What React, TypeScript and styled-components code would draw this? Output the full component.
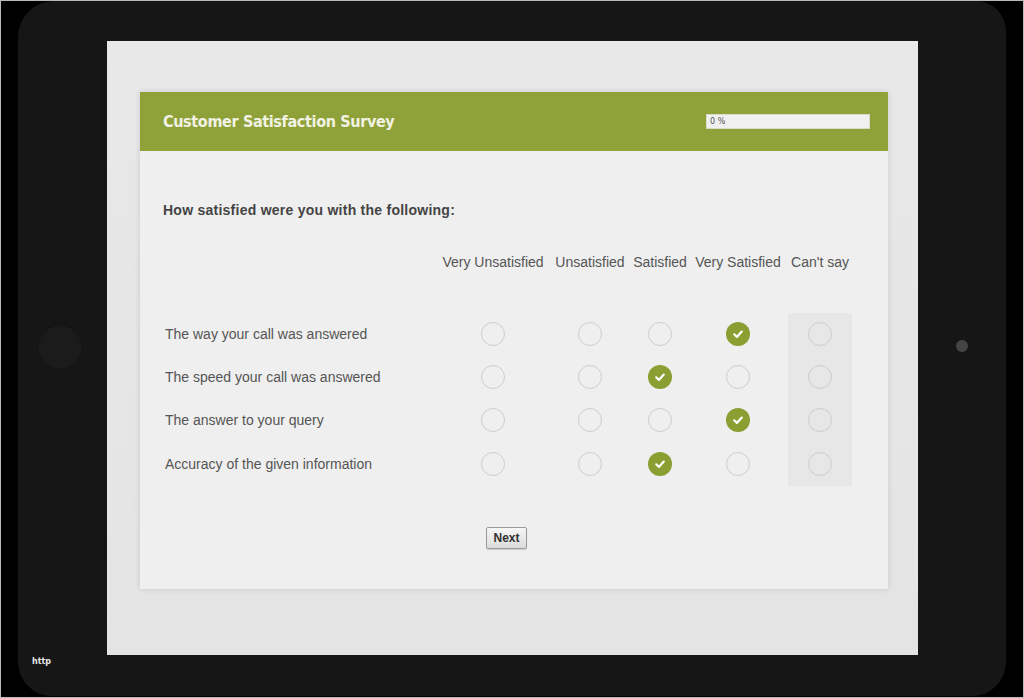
import React from "react";
import styled, { createGlobalStyle } from "styled-components";

const Global = createGlobalStyle`
  html, body { margin: 0; padding: 0; background: #000; }
  body { width: 1024px; height: 698px; overflow: hidden; font-family: "Liberation Sans", Arial, sans-serif; }
  * { box-sizing: border-box; }
`;

const Frame = styled.div`
  width: 1024px;
  height: 698px;
  border: 1px solid #b9b9b9;
  background: #000;
  display: flex;
  padding: 0 17px 1px 17px;
`;

const Tablet = styled.div`
  position: relative;
  flex: 1;
  background: #161616;
  border-radius: 36px 30px 34px 34px;
  display: flex;
  padding: 40px 0 41px;
`;

const Bezel = styled.div<{ $w: number }>`
  width: ${(p) => p.$w}px;
  display: flex;
  align-items: center;
  justify-content: center;
`;

const HomeButton = styled.div`
  width: 46px;
  height: 46px;
  border-radius: 50%;
  background: #1b1b1b;
  box-shadow: 0 0 3px rgba(0, 0, 0, 0.6) inset;
  margin-left: -6px;
  margin-top: -3px;
`;

const Camera = styled.div`
  width: 12px;
  height: 12px;
  border-radius: 50%;
  background: #444;
  margin-top: -4px;
`;

const Url = styled.span`
  position: absolute;
  left: 14px;
  bottom: 30px;
  font-family: "DejaVu Sans", sans-serif;
  font-size: 8px;
  font-weight: bold;
  color: #e6e6e6;
`;

const Screen = styled.div`
  width: 811px;
  background: linear-gradient(#e8e8e8, #e4e4e4);
  padding: 51px 30px 0 33px;
`;

const Card = styled.div`
  height: 497px;
  background: #efefef;
  box-shadow: 0 0 6px rgba(0, 0, 0, 0.12);
  display: flex;
  flex-direction: column;
`;

const Header = styled.div`
  height: 59px;
  background: #8fa23a;
  display: flex;
  align-items: center;
  justify-content: space-between;
  padding: 0 18px 0 23px;
`;

const Title = styled.h1`
  margin: 0;
  font-family: "DejaVu Sans Condensed", "DejaVu Sans", sans-serif;
  font-weight: bold;
  font-size: 16px;
  color: #f2f2e4;
  letter-spacing: -0.35px;
`;

const Progress = styled.div`
  width: 164px;
  height: 15px;
  background: #f0f0f0;
  border: 1px solid #d8dcc8;
  font-family: "DejaVu Sans", sans-serif;
  font-size: 8px;
  color: #555;
  display: flex;
  align-items: center;
  padding-left: 3px;
`;

const Body = styled.div`
  padding: 0 23px;
  display: flex;
  flex-direction: column;
`;

const Question = styled.h2`
  margin: 51px 0 0;
  font-size: 14px;
  line-height: 17px;
  font-weight: bold;
  color: #444;
  letter-spacing: 0.25px;
`;

const Grid = styled.div`
  display: grid;
  grid-template-columns: 275px 110px 84px 56px 100px 64px;
  margin-top: 35px;
`;

const ColHead = styled.div`
  font-size: 14px;
  line-height: 17px;
  color: #555;
  text-align: center;
  white-space: nowrap;
  height: 59px;
`;

const Label = styled.div`
  height: 43.3px;
  display: flex;
  align-items: center;
  padding-left: 2px;
  padding-bottom: 2px;
  font-size: 14px;
  color: #555;
`;

const Cell = styled.div<{ $shade?: boolean }>`
  height: 43.3px;
  display: flex;
  align-items: center;
  justify-content: center;
  padding-bottom: 2px;
  background: ${(p) => (p.$shade ? "#e7e7e7" : "transparent")};
`;

const Radio = styled.div<{ $on: boolean }>`
  width: 24px;
  height: 24px;
  border-radius: 50%;
  border: ${(p) => (p.$on ? "none" : "1.5px solid #cdcdcd")};
  background: ${(p) => (p.$on ? "#8a9f32" : "transparent")};
  display: flex;
  align-items: center;
  justify-content: center;
`;

const Footer = styled.div`
  display: flex;
  justify-content: center;
  margin-top: 41px;
  padding-right: 15px;
`;

const NextButton = styled.button`
  width: 41px;
  height: 22px;
  padding: 0;
  font-family: "Liberation Sans", Arial, sans-serif;
  font-size: 12px;
  font-weight: bold;
  color: #333;
  background: linear-gradient(#f6f6f6, #dcdcdc);
  border: 1px solid #9a9a9a;
  border-radius: 2px;
  box-shadow: 0 1px 1px rgba(0, 0, 0, 0.15);
`;

const Check = () => (
  <svg width="14" height="14" viewBox="0 0 14 14">
    <path d="M3.2 7.3 L5.9 9.9 L10.8 4.6" fill="none" stroke="#fff" strokeWidth="2.2" strokeLinecap="round" strokeLinejoin="round" />
  </svg>
);

const columns = ["Very Unsatisfied", "Unsatisfied", "Satisfied", "Very Satisfied", "Can't say"];
const rows: { label: string; value: number }[] = [
  { label: "The way your call was answered", value: 3 },
  { label: "The speed your call was answered", value: 2 },
  { label: "The answer to your query", value: 3 },
  { label: "Accuracy of the given information", value: 2 },
];

export default function App() {
  return (
    <>
      <Global />
      <Frame>
        <Tablet>
          <Bezel $w={89}>
            <HomeButton />
          </Bezel>
          <Screen>
            <Card>
              <Header>
                <Title>Customer Satisfaction Survey</Title>
                <Progress>0 %</Progress>
              </Header>
              <Body>
                <Question>How satisfied were you with the following:</Question>
                <Grid>
                  <ColHead />
                  {columns.map((c) => (
                    <ColHead key={c}>{c}</ColHead>
                  ))}
                  {rows.map((r) => (
                    <React.Fragment key={r.label}>
                      <Label>{r.label}</Label>
                      {columns.map((c, i) => (
                        <Cell key={c} $shade={i === 4}>
                          <Radio $on={r.value === i}>{r.value === i && <Check />}</Radio>
                        </Cell>
                      ))}
                    </React.Fragment>
                  ))}
                </Grid>
                <Footer>
                  <NextButton>Next</NextButton>
                </Footer>
              </Body>
            </Card>
          </Screen>
          <Bezel $w={88}>
            <Camera />
          </Bezel>
          <Url>http</Url>
        </Tablet>
      </Frame>
    </>
  );
}
